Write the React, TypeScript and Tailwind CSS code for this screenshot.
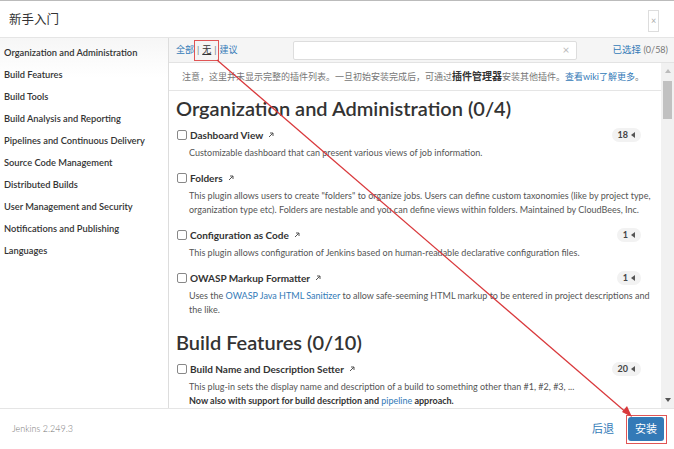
import React from "react";

const sidebar = [
  "Organization and Administration",
  "Build Features",
  "Build Tools",
  "Build Analysis and Reporting",
  "Pipelines and Continuous Delivery",
  "Source Code Management",
  "Distributed Builds",
  "User Management and Security",
  "Notifications and Publishing",
  "Languages",
];

const Ext = () => (
  <svg width="8" height="8" viewBox="0 0 8 8" className="ml-[4px] inline-block">
    <path d="M2 6 L6 2 M3 2 H6 V5" stroke="#555" strokeWidth="1" fill="none" />
  </svg>
);

const Badge = ({ n }: { n: string }) => (
  <span className="flex items-center gap-[3px] rounded-full bg-[#f2f2f2] px-[6px] h-[14px] text-[9px] font-bold text-[#444]">
    {n}
    <svg width="4" height="6" viewBox="0 0 4 6">
      <path d="M4 0 L0 3 L4 6 Z" fill="#555" />
    </svg>
  </span>
);

const Plugin = ({ name, count, children }: { name: string; count?: string; children: React.ReactNode }) => (
  <div className="mb-[11px]">
    <div className="flex items-center h-[14px]">
      <span className="w-[10px] h-[10px] rounded-[2px] border border-[#888] bg-white mr-[3px] ml-[1px]" />
      <span className="text-[10px] font-bold text-[#333]">{name}</span>
      <Ext />
      {count ? (
        <span className="ml-auto">
          <Badge n={count} />
        </span>
      ) : null}
    </div>
    <div className="mt-[4px] pl-[13px] -mr-[15px] text-[9px] leading-[14px] text-[#555]">{children}</div>
  </div>
);

export default function App() {
  return (
    <div
      className="relative w-[674px] h-[449px] bg-white border-t border-[#bbb] flex flex-col overflow-hidden"
      style={{ fontFamily: 'Lato, "Noto Sans CJK SC", sans-serif' }}
    >
      {/* header */}
      <div className="h-[37px] flex items-center justify-between pl-[9px] pr-[15px] border-b border-[#e5e5e5] shrink-0">
        <span className="text-[12.5px] text-[#333] mt-[2px]">新手入门</span>
        <span className="w-[11px] h-[22px] border border-[#ddd] flex items-center justify-center text-[9px] text-[#aaa] mt-[4px]">
          ×
        </span>
      </div>

      {/* body */}
      <div className="flex h-[370px] shrink-0">
        <div className="w-[169px] border-r border-[#ddd] pt-[4px] shrink-0 bg-gradient-to-b from-[#f6f6f6] to-white to-[40px]">
          {sidebar.map((s) => (
            <div key={s} className="h-[22px] flex items-center pl-[4px] text-[9.3px] font-semibold text-[#333] whitespace-nowrap">
              {s}
            </div>
          ))}
        </div>

        <div className="flex-1 flex flex-col min-w-0">
          <div className="h-[25px] bg-[#f5f5f5] border-b border-[#e3e3e3] flex items-center pl-[7px] pr-[6px] shrink-0">
            <span className="text-[9px] text-[#337ab7]">全部</span>
            <span className="text-[9px] text-[#777] mx-[3px]">|</span>
            <span className="text-[9px] text-[#333] underline">无</span>
            <span className="text-[9px] text-[#777] mx-[3px]">|</span>
            <span className="text-[9px] text-[#337ab7]">建议</span>
            <div className="ml-[55px] w-[284px] h-[19px] bg-white border border-[#ddd] rounded-[2px] flex items-center justify-end pr-[6px] text-[12px] text-[#bbb]">
              ×
            </div>
            <span className="ml-auto text-[9.5px] text-[#337ab7] whitespace-nowrap">
              已选择 <span className="text-[9px] text-[#777]">(0/58)</span>
            </span>
          </div>

          <div className="flex flex-1 min-h-0">
            <div className="flex-1 min-w-0 overflow-hidden">
              <div className="h-[28px] border-b border-[#e5e5e5] flex items-center pl-[13px] text-[9px] text-[#777] whitespace-nowrap">
                <span>
                  注意，这里并未显示完整的插件列表。一旦初始安装完成后，可通过
                  <span className="text-[#333] font-bold text-[10px]">插件管理器</span>
                  安装其他插件。
                  <span className="text-[#337ab7]">查看wiki了解更多</span>。
                </span>
              </div>
              <div className="pl-[7px] pr-[20px]">
                <h2 className="text-[20px] font-semibold text-[#333] leading-[28px] mt-[3px] mb-[6px]">
                  Organization and Administration (0/4)
                </h2>
                <Plugin name="Dashboard View" count="18">
                  Customizable dashboard that can present various views of job information.
                </Plugin>
                <Plugin name="Folders">
                  This plugin allows users to create "folders" to organize jobs. Users can define custom taxonomies (like by project type, organization type etc). Folders are nestable and you can define views within folders. Maintained by CloudBees, Inc.
                </Plugin>
                <Plugin name="Configuration as Code" count="1">
                  This plugin allows configuration of Jenkins based on human-readable declarative configuration files.
                </Plugin>
                <Plugin name="OWASP Markup Formatter" count="1">
                  Uses the <span className="text-[#337ab7]">OWASP Java HTML Sanitizer</span> to allow safe-seeming HTML markup to be entered in project descriptions and the like.
                </Plugin>
                <h2 className="text-[20px] font-semibold text-[#333] leading-[28px] mt-[3px] mb-[6px]">
                  Build Features (0/10)
                </h2>
                <Plugin name="Build Name and Description Setter" count="20">
                  This plug-in sets the display name and description of a build to something other than #1, #2, #3, ...
                  <br />
                  <b className="text-[#333]">
                    Now also with support for build description and <span className="font-normal text-[#337ab7]">pipeline</span> approach.
                  </b>
                </Plugin>
              </div>
            </div>
            <div className="w-[13px] bg-[#f1f1f1] shrink-0 flex flex-col items-center">
              <svg width="6" height="4" viewBox="0 0 6 4" className="mt-[6px]">
                <path d="M0 4 L3 0 L6 4 Z" fill="#bbb" />
              </svg>
              <div className="w-[9px] h-[38px] bg-[#c1c1c1] mt-[8px]" />
              <div className="flex-1" />
              <svg width="6" height="4" viewBox="0 0 6 4" className="mb-[6px]">
                <path d="M0 0 L3 4 L6 0 Z" fill="#555" />
              </svg>
            </div>
          </div>
        </div>
      </div>

      {/* footer */}
      <div className="flex-1 border-t border-[#e5e5e5] flex items-center pl-[12px] pr-[10px]">
        <span className="text-[9px] text-[#777] font-light">Jenkins 2.249.3</span>
        <span className="ml-auto text-[11px] text-[#337ab7] mr-[14px]">后退</span>
        <span className="w-[36px] h-[24px] rounded-[3px] bg-[#337ab7] text-white text-[11px] flex items-center justify-center">
          安装
        </span>
      </div>

      {/* annotations */}
      <svg className="absolute inset-0 pointer-events-none" width="674" height="449">
        <rect x="194.5" y="39.5" width="24" height="20" fill="none" stroke="#e05555" strokeWidth="1" />
        <rect x="626.5" y="414.5" width="40" height="28" fill="none" stroke="#e05555" strokeWidth="1" />
        <line x1="217" y1="59" x2="628" y2="413" stroke="#d9393c" strokeWidth="1.2" />
        <path d="M632 416 L622 411 L627 405 Z" fill="#d9393c" />
      </svg>
    </div>
  );
}
